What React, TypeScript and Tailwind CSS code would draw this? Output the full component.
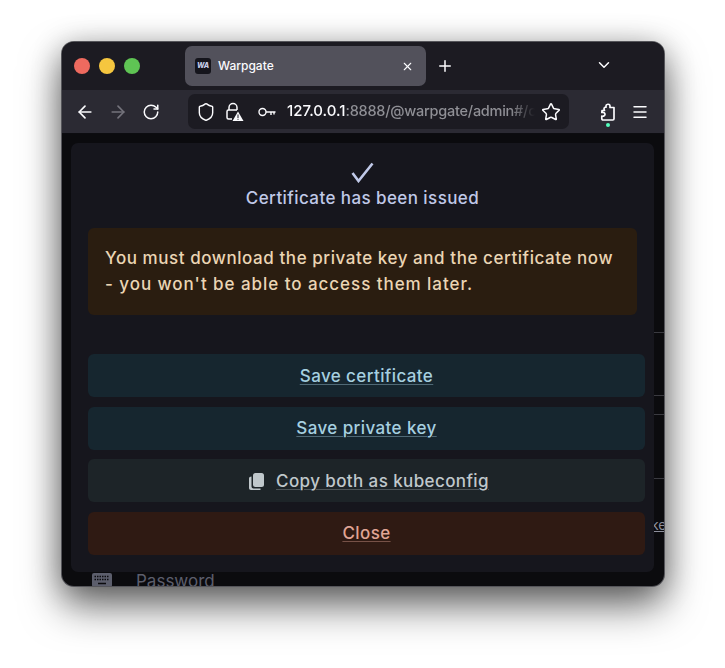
import { X, Plus, ChevronDown, ArrowLeft, ArrowRight, RotateCw, Shield, Star, Menu } from 'lucide-react';

const font = { fontFamily: 'Inter, "Noto Sans", sans-serif' };

const TitleBar = () => (
  <div className="flex h-[48px] items-center bg-[#1c1b22] pl-[12px]">
    <div className="flex gap-[9px]">
      <span className="h-[16px] w-[16px] rounded-full bg-[#ee6a5f]" />
      <span className="h-[16px] w-[16px] rounded-full bg-[#f5c63f]" />
      <span className="h-[16px] w-[16px] rounded-full bg-[#5fc454]" />
    </div>
    <div className="ml-[45px] flex h-[40px] w-[241px] items-center rounded-[7px] bg-[#52515b] pl-[10px] pr-[12px]">
      <span className="flex h-[16px] w-[16px] items-center justify-center rounded-[3px] bg-[#15151c] text-[7px] font-extrabold italic text-[#c5cde8]">WA</span>
      <span className="ml-[7px] flex-1 text-[12px] font-medium text-[#fbfbfe]">Warpgate</span>
      <X size={13} strokeWidth={2} className="text-[#fbfbfe]" />
    </div>
    <Plus size={18} strokeWidth={2} className="ml-[10px] text-[#fbfbfe]" />
    <ChevronDown size={18} strokeWidth={2} className="ml-[141px] -translate-y-[1px] text-[#fbfbfe]" />
  </div>
);

const LockWarning = () => (
  <svg width="19" height="20" viewBox="0 0 19 20" fill="none" className="text-[#fbfbfe]">
    <path d="M4 8V5.500a4 4 0 0 1 8 0V8" stroke="currentColor" strokeWidth="1.500" />
    <path d="M7 17H3.500A1.500 1.500 0 0 1 2 15.500V9.500A1.500 1.500 0 0 1 3.500 8H12" stroke="currentColor" strokeWidth="1.500" />
    <path d="M13 9.500L18.500 19H7.500Z" fill="currentColor" />
    <rect x="12.500" y="12.500" width="1" height="3.500" fill="#1c1b22" />
    <rect x="12.500" y="16.800" width="1" height="1" fill="#1c1b22" />
  </svg>
);

const KeyIcon = () => (
  <svg width="18" height="10" viewBox="0 0 18 10" fill="none" className="text-[#fbfbfe]">
    <circle cx="4.500" cy="5" r="3.500" stroke="currentColor" strokeWidth="1.400" />
    <path d="M8 5H17.500M13 5V8M16 5V7.500" stroke="currentColor" strokeWidth="1.400" />
  </svg>
);

const PuzzleIcon = () => (
  <svg width="16" height="20" viewBox="0 0 16 20" fill="none" className="text-[#fbfbfe]">
    <path
      d="M2 8.500H4.500C3.500 6.800 4.200 5.500 5.200 5.200H6V3.800C6 2 9.800 1.500 10 3.800V5.500H14V16.800C14 17.500 13.500 18 12.800 18H3C2.300 18 1.800 17.500 1.800 16.800V14.200C3.800 14.500 5 13.500 5 12.200C5 10.800 3.800 10.200 1.800 10.500Z"
      stroke="currentColor"
      strokeWidth="1.700"
      strokeLinejoin="round"
    />
  </svg>
);

const ToolBar = () => (
  <div className="flex h-[44px] items-center border-b border-[#0c0c10] bg-[#2b2a33] pl-[13px]">
    <ArrowLeft size={20} strokeWidth={2} className="text-[#fbfbfe]" />
    <ArrowRight size={20} strokeWidth={2} className="ml-[13px] text-[#74737c]" />
    <RotateCw size={18} strokeWidth={2} className="ml-[14px] text-[#fbfbfe]" />
    <div className="ml-[28px] flex h-[35px] w-[381px] items-center rounded-[7px] bg-[#1c1b22] pl-[8px]">
      <Shield size={20} strokeWidth={1.700} className="text-[#fbfbfe]" />
      <span className="ml-[9px] flex"><LockWarning /></span>
      <span className="ml-[14px] flex"><KeyIcon /></span>
      <span className="ml-[11px] w-[248px] overflow-hidden whitespace-nowrap text-[14.500px] font-medium tracking-[-0.250px] text-[#8f8f95] [mask-image:linear-gradient(to_right,black_90%,transparent)]">
        <span className="text-[15px] tracking-normal text-[#fbfbfe]">127.0.0.1</span>:8888/@warpgate/admin#/c
      </span>
      <Star size={20} strokeWidth={1.800} className="ml-[6px] text-[#fbfbfe]" />
    </div>
    <div className="relative ml-[31px] flex">
      <PuzzleIcon />
      <span className="absolute bottom-[-5px] left-[6px] h-[4px] w-[4px] rounded-full bg-[#54ffbd]" />
    </div>
    <Menu size={18} strokeWidth={2} className="ml-[15px] text-[#fbfbfe]" />
  </div>
);

const CopyIcon = () => (
  <svg width="17" height="19" viewBox="0 0 17 19" className="text-[#c0c8cc]">
    <rect x="5" y="1" width="11" height="14" rx="2.500" fill="currentColor" />
    <path d="M3.500 4.500V14.500C3.500 15.800 4.500 16.500 5.500 16.500H12.500V18H3C1.800 18 1 17.200 1 16V6.500C1 5.300 2 4.500 3.500 4.500Z" fill="currentColor" />
  </svg>
);

const ActionButton = ({ label, className, lineClass, icon }: { label: string; className: string; lineClass: string; icon?: React.ReactNode }) => (
  <button className={`flex h-[43px] w-full items-center justify-center gap-[11px] rounded-[6px] pt-[2px] text-[17px] font-[450] tracking-[0.400px] ${className}`}>
    {icon}
    <span className={`underline decoration-1 underline-offset-[2px] ${lineClass}`}>{label}</span>
  </button>
);

const Dialog = () => (
  <div className="ml-[9px] mr-[10px] mt-[9px] flex h-[429px] flex-col rounded-[7px] bg-[#16161d] pl-[17px] pr-[9px] pt-[19px]">
    <div className="mr-[8px] flex flex-col items-center text-[#c0c9e8]">
      <svg width="23" height="21" viewBox="0 0 23 21" fill="none">
        <path d="M1.500 11L7.500 19L21.500 1.500" stroke="currentColor" strokeWidth="2.600" />
      </svg>
      <span className="mt-[3px] text-[17px] font-[450] leading-[24px] tracking-[0.420px]">Certificate has been issued</span>
    </div>
    <div className="mr-[8px] mt-[18px] h-[87px] rounded-[6px] bg-[#2a1d10] px-[17px] pt-[17px] text-[17px] font-[450] leading-[26px] tracking-[0.560px] text-[#ebd5b4]">
      You must download the private key and the certificate now
      <br />
      <span className="tracking-[0.950px]">- you won't be able to access them later.</span>
    </div>
    <div className="mt-[39px] flex flex-col gap-[9.500px]">
      <ActionButton label="Save certificate" className="bg-[#16262f] text-[#a6d0e0]" lineClass="decoration-[#a6d0e0]/40" />
      <ActionButton label="Save private key" className="bg-[#16262f] text-[#a6d0e0]" lineClass="decoration-[#a6d0e0]/40" />
      <ActionButton label="Copy both as kubeconfig" className="bg-[#1d2428] pl-[4px] text-[#c0c8cc]" lineClass="decoration-[#c0c8cc]/30" icon={<CopyIcon />} />
      <ActionButton label="Close" className="bg-[#2f1a13] text-[#e0a595]" lineClass="decoration-[#e0a595]/40" />
    </div>
  </div>
);

const Keyboard = () => (
  <svg width="20" height="14" viewBox="0 0 20 14" className="-translate-y-[2px] text-[#5c5e6c]">
    <rect width="20" height="14" rx="2" fill="currentColor" />
    <path d="M2.500 3.500H17.500M2.500 6.500H17.500" stroke="#0b0b0e" strokeWidth="1.500" strokeDasharray="1.500 1" />
    <path d="M6 10.500H14" stroke="#0b0b0e" strokeWidth="1.500" />
  </svg>
);

export default function App() {
  return (
    <div className="h-[668px] w-[725px] overflow-hidden bg-white pl-[62px] pt-[42px]" style={font}>
      <div className="relative h-[544px] w-[602px] overflow-hidden rounded-[12px] bg-[#0b0b0e] shadow-[0_0_0_1px_#55555a,0_20px_40px_rgba(0,0,0,0.55),0_4px_30px_rgba(0,0,0,0.3)]">
        <TitleBar />
        <ToolBar />
        <Dialog />
        <div className="absolute left-[30px] top-[527px] flex items-center text-[17px] text-[#5c5e6c]">
          <Keyboard />
          <span className="ml-[24px]">Password</span>
        </div>
        <div className="absolute left-[592px] top-[290px] h-px w-[10px] bg-[#3a3a40]" />
        <div className="absolute left-[592px] top-[353px] h-px w-[10px] bg-[#3a3a40]" />
        <div className="absolute left-[592px] top-[372px] h-px w-[10px] bg-[#3a3a40]" />
        <div className="absolute left-[592px] top-[436px] h-px w-[10px] bg-[#3a3a40]" />
        <div className="absolute left-[592px] top-[472px] w-[10px] overflow-hidden">
          <span className="-ml-[3px] block text-[14px] text-[#8d8f9c] underline">ke</span>
        </div>
      </div>
    </div>
  );
}
